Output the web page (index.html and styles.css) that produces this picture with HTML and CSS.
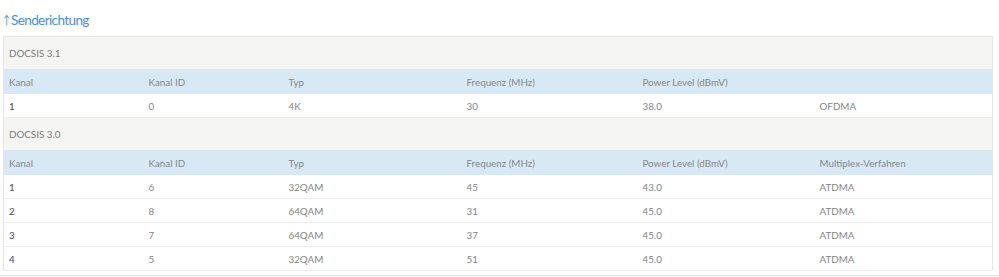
FILE: index.html
```html
<!DOCTYPE html>
<html lang="de">
<head>
<meta charset="utf-8">
<link rel="stylesheet" href="styles.css">
</head>
<body>
<div class="wrap">
  <h2 class="title"><span class="arrow">↑</span>Senderichtung</h2>
  <table class="tbl">
    <colgroup>
      <col class="c1"><col class="c2"><col class="c3"><col class="c4"><col class="c5"><col class="c6">
    </colgroup>
    <tr class="group"><td colspan="6">DOCSIS 3.1</td></tr>
    <tr class="head"><td>Kanal</td><td>Kanal ID</td><td>Typ</td><td>Frequenz (MHz)</td><td>Power Level (dBmV)</td><td></td></tr>
    <tr class="row"><td class="k">1</td><td>0</td><td>4K</td><td>30</td><td>38.0</td><td>OFDMA</td></tr>
    <tr class="group"><td colspan="6">DOCSIS 3.0</td></tr>
    <tr class="head"><td>Kanal</td><td>Kanal ID</td><td>Typ</td><td>Frequenz (MHz)</td><td>Power Level (dBmV)</td><td>Multiplex-Verfahren</td></tr>
    <tr class="row"><td class="k">1</td><td>6</td><td>32QAM</td><td>45</td><td>43.0</td><td>ATDMA</td></tr>
    <tr class="row"><td class="k">2</td><td>8</td><td>64QAM</td><td>31</td><td>45.0</td><td>ATDMA</td></tr>
    <tr class="row"><td class="k">3</td><td>7</td><td>64QAM</td><td>37</td><td>45.0</td><td>ATDMA</td></tr>
    <tr class="row"><td class="k">4</td><td>5</td><td>32QAM</td><td>51</td><td>45.0</td><td>ATDMA</td></tr>
  </table>
</div>
<div class="rule"></div>
</body>
</html>
```
FILE: styles.css
```css
html, body {
  margin: 0;
  padding: 0;
  background: #fff;
  font-family: Lato, "Open Sans", sans-serif;
}
.wrap {
  padding: 0 7px 0 3px;
}
.title {
  margin: 0;
  padding-top: 12px;
  height: 36px;
  box-sizing: border-box;
  font-size: 13.5px;
  font-weight: 400;
  letter-spacing: -0.6px;
  color: #4a8fdc;
  line-height: 16px;
  display: flex;
  align-items: flex-start;
}
.arrow {
  display: inline-block;
  width: 8px;
  font-size: 12px;
  letter-spacing: 0;
  transform: scaleX(0.8);
  transform-origin: left center;
}
.tbl {
  width: 990px;
  border-collapse: collapse;
  border: 1px solid #e6e6e6;
  table-layout: fixed;
  font-size: 9.8px;
  color: #858585;
}
.c1, .c2 { width: 140px; }
.c3 { width: 178px; }
.c4 { width: 176px; }
.c5 { width: 177px; }
.tbl td {
  padding: 0 0 0 5px;
  white-space: nowrap;
}
.group td {
  background: #f5f5f3;
  height: 32px;
  color: #7a7a7a;
}
.head td {
  background: #d9e8f5;
  height: 25px;
  color: #85888b;
}
.row td {
  height: 23px;
  border-bottom: 1px solid #eeeeee;
}
.row td.k {
  color: #4a4a4a;
}
.rule {
  margin-top: 4px;
  height: 1px;
  background: #e4e4e4;
}
```
